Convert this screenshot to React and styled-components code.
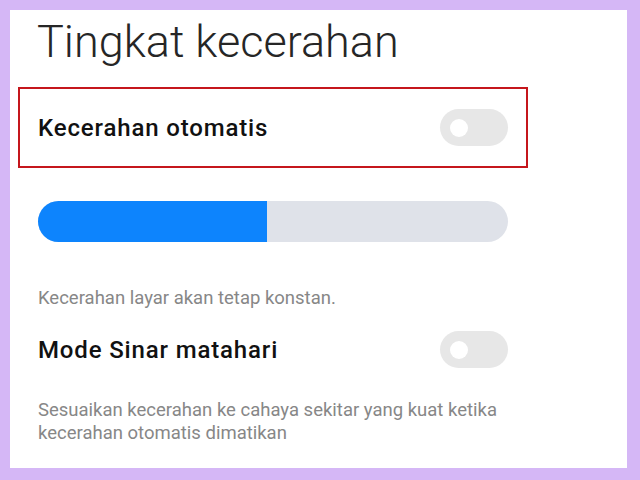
import React from "react";
import styled, { createGlobalStyle } from "styled-components";

const GlobalStyle = createGlobalStyle`
  html, body {
    margin: 0;
    padding: 0;
    background: #d5b7f6;
  }
  * {
    box-sizing: border-box;
  }
`;

const Frame = styled.div`
  width: 640px;
  height: 480px;
  padding: 10px 13px 12px 10px;
  background: #d5b7f6;
  font-family: Roboto, "Noto Sans", sans-serif;
`;

const Panel = styled.div`
  height: 100%;
  background: #ffffff;
  padding: 0 0 0 8px;
  display: flex;
  flex-direction: column;
  align-items: flex-start;
`;

const Title = styled.h1`
  margin: 5px 0 0 19px;
  font-size: 45px;
  line-height: 54px;
  font-weight: 300;
  color: #262626;
`;

const Highlight = styled.div`
  margin-top: 18px;
  width: 510px;
  height: 81px;
  border: 2px solid #c5161c;
  padding: 0 18px;
  display: flex;
  align-items: center;
`;

const Row = styled.div`
  display: flex;
  align-items: center;
  justify-content: space-between;
  width: 470px;
  margin-left: ${(p) => p.$inset || 0}px;
  margin-top: ${(p) => p.$top || 0}px;
`;

const Label = styled.span`
  font-size: 24px;
  font-weight: 500;
  color: #111111;
  letter-spacing: 0.85px;
`;

const Toggle = styled.div`
  width: 68px;
  height: 37px;
  border-radius: 19px;
  background: #e7e7e7;
  display: flex;
  align-items: center;
  padding-left: 10px;
  &::before {
    content: "";
    width: 18px;
    height: 18px;
    border-radius: 50%;
    background: #ffffff;
  }
`;

const Slider = styled.div`
  margin: 33px 0 0 20px;
  width: 470px;
  height: 41px;
  border-radius: 21px;
  background: #dfe2e9;
  overflow: hidden;
  display: flex;
`;

const Fill = styled.div`
  background: #0d84fd;
  height: 100%;
`;

const Note = styled.p`
  margin: ${(p) => p.$top}px 0 0 20px;
  width: 480px;
  font-size: 18.5px;
  line-height: 23px;
  color: #878787;
`;

export default function App() {
  const level = 0.487;
  return (
    <Frame>
      <GlobalStyle />
      <Panel>
        <Title>Tingkat kecerahan</Title>
        <Highlight>
          <Row>
            <Label>Kecerahan otomatis</Label>
            <Toggle />
          </Row>
        </Highlight>
        <Slider>
          <Fill style={{ width: `${level * 100}%` }} />
        </Slider>
        <Note $top={45}>Kecerahan layar akan tetap konstan.</Note>
        <Row $inset={20} $top={21}>
          <Label>Mode Sinar matahari</Label>
          <Toggle />
        </Row>
        <Note $top={31}>
          Sesuaikan kecerahan ke cahaya sekitar yang kuat ketika kecerahan
          otomatis dimatikan
        </Note>
      </Panel>
    </Frame>
  );
}
